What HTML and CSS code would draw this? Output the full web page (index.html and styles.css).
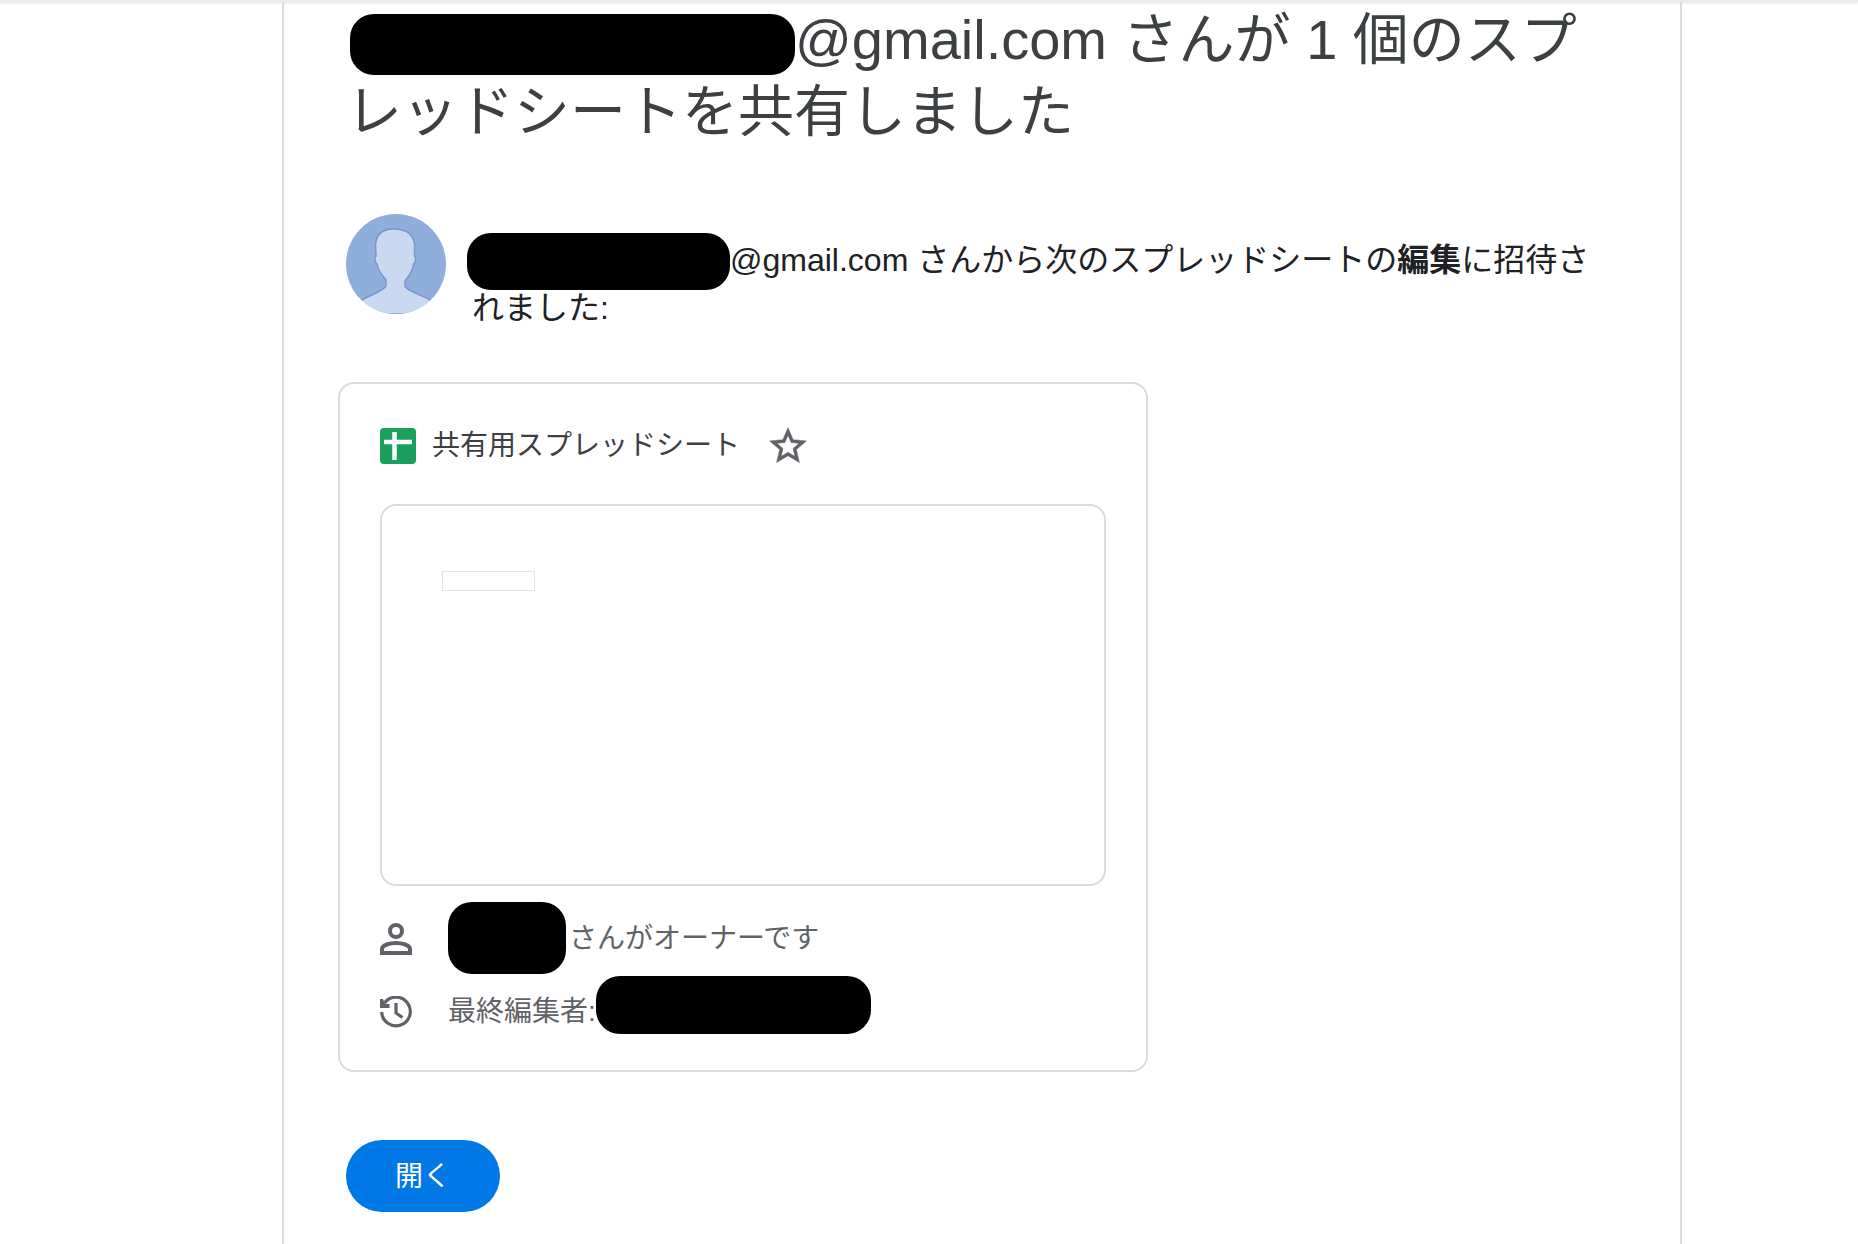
FILE: index.html
```html
<!DOCTYPE html>
<html lang="ja">
<head>
<meta charset="utf-8">
<meta name="viewport" content="width=device-width, initial-scale=1">
<title>共有用スプレッドシート</title>
<link rel="stylesheet" href="styles.css">
</head>
<body>
<div class="topbar"></div>
<main class="mail">
  <h1 class="title"><span class="redacted redacted-title"></span>@gmail.com さんが 1 個のスプレッドシートを共有しました</h1>

  <section class="invite">
    <svg class="avatar" viewBox="0 0 100 100" aria-hidden="true">
      <clipPath id="round"><circle cx="50" cy="50" r="50"/></clipPath>
      <g clip-path="url(#round)">
        <rect width="100" height="100" fill="#8faedc"/>
        <path d="M48 15C36 15 30 21 29.500 31L30 42C28 42 29 49 31 50C32 57 36 61 40 66V72C38 77 26 80 16 86L6 100H94L84 86C74 80 60 77 59 72V67C63 62 67 57 67.500 50C70 49 70 42 68.500 42L68.500 30C67 20 60 15 48 15Z" fill="#c9daf0" stroke="#7897c8" stroke-width="1.500"/>
      </g>
    </svg>
    <p class="invite-text"><span class="redacted redacted-sender"></span>@gmail.com さんから次のスプレッドシートの<b>編集</b>に招待されました:</p>
  </section>

  <section class="card">
    <header class="card-head">
      <svg class="sheet-icon" viewBox="0 0 36 36" aria-hidden="true">
        <rect width="36" height="36" rx="4" fill="#1a9f5c"/>
        <path d="M14.500 4V32M4 14H32" stroke="#fff" stroke-width="4.500" fill="none"/>
      </svg>
      <h2 class="file-name">共有用スプレッドシート</h2>
      <button class="star" type="button" aria-label="スターを付ける">
        <svg viewBox="0 0 24 24" aria-hidden="true"><path fill="#5f6368" stroke="#5f6368" stroke-width=".3" d="M22 9.240l-7.190-.620L12 2 9.190 8.630 2 9.240l5.460 4.730L5.820 21 12 17.270 18.180 21l-1.630-7.030L22 9.240zM12 15.400l-3.760 2.270 1-4.280-3.320-2.880 4.380-.380L12 6.100l1.710 4.040 4.380.380-3.320 2.880 1 4.280L12 15.400z"/></svg>
      </button>
    </header>

    <div class="preview"><div class="cell"></div></div>

    <div class="detail detail-owner">
      <svg class="detail-icon" viewBox="0 0 32 32" aria-hidden="true">
        <circle cx="16" cy="8" r="6" fill="none" stroke="#5f6368" stroke-width="4"/>
        <path d="M2 30V26C2 22 10 20 16 20S30 22 30 26V30Z" fill="none" stroke="#5f6368" stroke-width="4"/>
      </svg>
      <span class="redacted redacted-owner"></span>
      <span>さんがオーナーです</span>
    </div>
    <div class="detail">
      <svg class="detail-icon" viewBox="0 0 32 32" aria-hidden="true">
        <path d="M4.500 7A14.300 14.300 0 1 1 1.700 16" fill="none" stroke="#5f6368" stroke-width="3.200"/>
        <path d="M0 3H3L5 8H9.500V12H0Z" fill="#5f6368"/>
        <path d="M16 7V17L22.500 21.500" fill="none" stroke="#5f6368" stroke-width="3.200"/>
      </svg>
      <span>最終編集者:</span>
      <span class="redacted redacted-editor"></span>
    </div>
  </section>

  <button class="open" type="button">開く</button>
</main>
</body>
</html>
```
FILE: styles.css
```css
* {
  box-sizing: border-box;
}

body {
  margin: 0;
  min-height: 100vh;
  display: flex;
  flex-direction: column;
  background: #fff;
  color: #202124;
  font-family: "Liberation Sans", "Noto Sans CJK JP", sans-serif;
}

.topbar {
  height: 2px;
  background: #e8ecf0;
  box-shadow: 0 1px 3px #d4d8dc;
}

.mail {
  flex: 1;
  margin: 0 176px 0 282px;
  padding: 2px 64px 32px 62px;
  border: solid #d8dce1;
  border-width: 0 2px;
}

.title {
  margin: 0;
  color: #3c4043;
  font-size: 56px;
  font-weight: 400;
  line-height: 72px;
}

.redacted {
  display: inline-block;
  vertical-align: top;
  border-radius: 24px;
  background: #000;
}

.redacted-title {
  width: 445px;
  height: 61px;
  margin: 10px 0 -10px 4px;
}

.invite {
  display: flex;
  align-items: flex-start;
  gap: 26px;
  margin-top: 66px;
}

.avatar {
  flex: none;
  width: 100px;
  height: 100px;
}

.invite-text {
  margin: 22px 0 0;
  font-size: 32px;
  line-height: 48px;
}

.redacted-sender {
  width: 263px;
  height: 57px;
  margin: -3px 0 -16px -5px;
}

.card {
  max-width: 810px;
  margin: 50px 0 0 -8px;
  padding: 44px 40px 22px;
  border: 2px solid #d8dce1;
  border-radius: 16px;
  font-size: 28px;
  line-height: 36px;
}

.card-head {
  display: flex;
  align-items: center;
  gap: 16px;
  height: 36px;
}

.sheet-icon {
  width: 36px;
  height: 36px;
}

.file-name {
  margin: 0;
  color: #3c4043;
  font-size: 28px;
  font-weight: 400;
}

.star {
  width: 44px;
  height: 44px;
  margin-left: 10px;
  padding: 0;
  border: 0;
  background: none;
}

.star svg {
  display: block;
}

.preview {
  height: 382px;
  margin: 40px 0 16px;
  padding: 65px 60px;
  border: 2px solid #d8dce1;
  border-radius: 16px;
}

.cell {
  width: 93px;
  height: 20px;
  border: 1px solid #e2e3e5;
}

.detail {
  display: flex;
  align-items: center;
  height: 72px;
  color: #5f6368;
}

.detail-owner {
  height: 74px;
}

.detail-icon {
  flex: none;
  width: 32px;
  height: 32px;
  margin-right: 36px;
}

.redacted-owner {
  align-self: flex-start;
  width: 118px;
  height: 72px;
  margin-right: 3px;
}

.redacted-editor {
  align-self: flex-start;
  width: 275px;
  height: 58px;
}

.open {
  display: block;
  height: 72px;
  margin-top: 68px;
  padding: 0 49px 4px;
  border: 0;
  border-radius: 36px;
  background: #0079e6;
  color: #fff;
  font: inherit;
  font-size: 28px;
}
```
